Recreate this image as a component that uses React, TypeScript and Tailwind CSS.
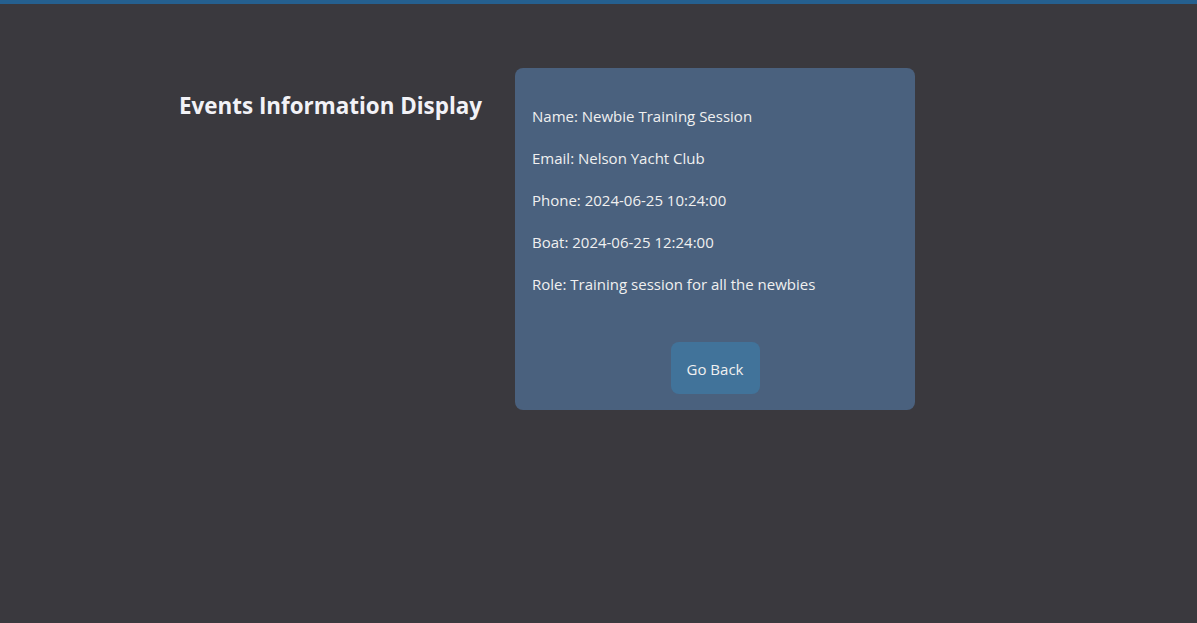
import React from "react";

export default function App() {
  const rows = [
    "Name: Newbie Training Session",
    "Email: Nelson Yacht Club",
    "Phone: 2024-06-25 10:24:00",
    "Boat: 2024-06-25 12:24:00",
    "Role: Training session for all the newbies",
  ];
  return (
    <div
      className="min-h-[623px] w-full bg-[#3a393e] text-[#f0f0f0]"
      style={{ fontFamily: '"Open Sans", "Noto Sans", sans-serif' }}
    >
      <div className="h-[4px] w-full bg-[#25608f]" />
      <div className="flex items-start pl-[179px] pt-[64px]">
        <h1 className="mt-[23px] w-[304px] whitespace-nowrap text-[22.4px] font-bold leading-[30px] text-[#f2f2f7]">
          Events Information Display
        </h1>
        <div className="ml-[32px] flex w-[400px] flex-col rounded-[8px] bg-[#4a617e] pb-[16px] pl-[17px] pr-[17px] pt-[36px]">
          <div className="flex flex-col gap-[18px]">
            {rows.map((r) => (
              <p key={r} className="h-[24px] whitespace-nowrap text-[15px] leading-[24px]">
                {r}
              </p>
            ))}
          </div>
          <button className="mx-auto mt-[46px] h-[52px] w-[89px] rounded-[8px] bg-[#41739a] pt-[2px] text-[15px] text-[#f0f0f0]">
            Go Back
          </button>
        </div>
      </div>
    </div>
  );
}
